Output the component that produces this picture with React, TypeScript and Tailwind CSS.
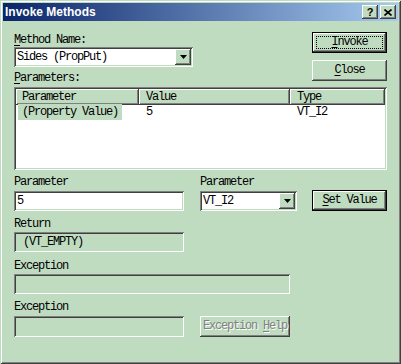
import type { ReactNode } from 'react'

// classic 3D edges, drawn as inset shadows
const raised =
  'shadow-[inset_-1px_-1px_#404040,inset_1px_1px_#ffffff,inset_-2px_-2px_#808080,inset_2px_2px_#c0dcc0]'
const sunken =
  'shadow-[inset_1px_1px_#808080,inset_-1px_-1px_#ffffff,inset_2px_2px_#404040,inset_-2px_-2px_#c0dcc0]'

function Button({
  children,
  isDefault,
  focused,
  disabled,
  className = '',
}: {
  children: ReactNode
  isDefault?: boolean
  focused?: boolean
  disabled?: boolean
  className?: string
}) {
  return (
    <div
      className={`relative flex items-center justify-center bg-[#c0dcc0] ${raised} ${
        isDefault ? 'border border-black' : ''
      } ${className}`}
    >
      {focused && <div className="absolute inset-[3px] border border-dotted border-black" />}
      <span className={disabled ? 'text-[#808080] [text-shadow:1px_1px_0_#ffffff]' : 'text-black'}>
        {children}
      </span>
    </div>
  )
}

function Combo({ value, className = '' }: { value: string; className?: string }) {
  return (
    <div className={`flex items-center bg-white p-[2px] ${sunken} ${className}`}>
      <span className="flex-1 pl-[1px]">{value}</span>
      <div className={`flex h-full w-[16px] items-center justify-center bg-[#c0dcc0] ${raised}`}>
        <svg width="7" height="4" viewBox="0 0 7 4">
          <polygon points="0,0 7,0 3.5,4" fill="#000" />
        </svg>
      </div>
    </div>
  )
}

function Field({ children, white, className = '' }: { children?: ReactNode; white?: boolean; className?: string }) {
  return (
    <div className={`flex items-center px-[3px] ${white ? 'bg-white' : 'bg-[#c0dcc0]'} ${sunken} ${className}`}>
      {children}
    </div>
  )
}

function HeaderCell({ children, className = '' }: { children: ReactNode; className?: string }) {
  return <div className={`flex h-full items-center bg-[#c0dcc0] ${raised} ${className}`}>{children}</div>
}

function TitleButton({ children }: { children: ReactNode }) {
  return (
    <div className={`flex h-[14px] w-[16px] items-center justify-center bg-[#c0dcc0] ${raised}`}>{children}</div>
  )
}

export default function App() {
  return (
    <div className="flex h-[364px] w-[401px] flex-col bg-[#c0dcc0] p-[3px] shadow-[inset_1px_1px_#c0dcc0,inset_-1px_-1px_#404040,inset_2px_2px_#ffffff,inset_-2px_-2px_#808080]">
      {/* Title bar */}
      <div className="flex h-[18px] items-center bg-linear-to-r/srgb from-[#0a246a] to-[#a6caf0] px-[2px]">
        <span className="font-['Liberation_Sans',sans-serif] text-[12px] font-bold leading-none text-white">
          Invoke Methods
        </span>
        <div className="ml-auto flex gap-[2px]">
          <TitleButton>
            <span className="font-['Liberation_Sans',sans-serif] text-[11px] font-bold leading-none text-black">?</span>
          </TitleButton>
          <TitleButton>
            <svg width="8" height="7" viewBox="0 0 8 7">
              <path d="M0.5 0.5L7.5 6.5M7.5 0.5L0.5 6.5" stroke="#000" strokeWidth="1.6" />
            </svg>
          </TitleButton>
        </div>
      </div>

      {/* Body */}
      <div className="flex-1 px-[11px] pt-[11px] font-['Liberation_Mono',monospace] text-[12px] leading-[13px] tracking-[-1.2px] text-black">
        <div className="flex justify-between">
          <div className="w-[179px] pt-[2px]">
            <div>
              <u className="underline-offset-2">M</u>ethod Name:
            </div>
            <Combo value="Sides (PropPut)" className="h-[20px]" />
            <div className="mt-[5px]">
              <u className="underline-offset-2">P</u>arameters:
            </div>
          </div>
          <div className="flex w-[75px] flex-col gap-[7px]">
            <Button isDefault focused className="h-[21px]">
              <u className="underline-offset-2">I</u>nvoke
            </Button>
            <Button className="h-[21px]">
              <u className="underline-offset-2">C</u>lose
            </Button>
          </div>
        </div>

        {/* Parameters list */}
        <div className={`mt-[2px] h-[83px] bg-white p-[2px] ${sunken}`}>
          <div className="flex h-[16px]">
            <HeaderCell className="w-[123px] pl-[6px]">Parameter</HeaderCell>
            <HeaderCell className="w-[151px] pl-[7px]">Value</HeaderCell>
            <HeaderCell className="w-[95px] pl-[7px]">Type</HeaderCell>
          </div>
          <div className="flex h-[14px] items-center">
            <div className="w-[123px] pl-[2px]">
              <span className="bg-[#c0dcc0] px-[4px] py-[1px]">(Property Value)</span>
            </div>
            <div className="w-[151px] pl-[7px]">5</div>
            <div className="w-[95px] pl-[7px]">VT_I2</div>
          </div>
        </div>

        <div className="mt-[6px] flex items-end">
          <div className="w-[170px]">
            <div>Parameter</div>
            <Field white className="mt-[2px] h-[20px]">
              5
            </Field>
          </div>
          <div className="ml-[16px] w-[97px]">
            <div>Parameter</div>
            <Combo value="VT_I2" className="mt-[2px] h-[20px]" />
          </div>
          <Button isDefault className="ml-auto h-[21px] w-[75px]">
            <u className="underline-offset-2">S</u>et Value
          </Button>
        </div>

        <div className="mt-[7px]">Return</div>
        <Field className="mt-[1px] h-[20px] w-[170px] pl-[9px]">(VT_EMPTY)</Field>

        <div className="mt-[8px]">Exception</div>
        <Field className="mt-[1px] h-[20px] w-[276px]" />

        <div className="mt-[7px]">Exception</div>
        <div className="mt-[2px] flex">
          <Field className="h-[21px] w-[170px]" />
          <Button disabled className="ml-[16px] h-[21px] w-[90px]">
            Exception <u className="underline-offset-2">H</u>elp
          </Button>
        </div>
      </div>
    </div>
  )
}
